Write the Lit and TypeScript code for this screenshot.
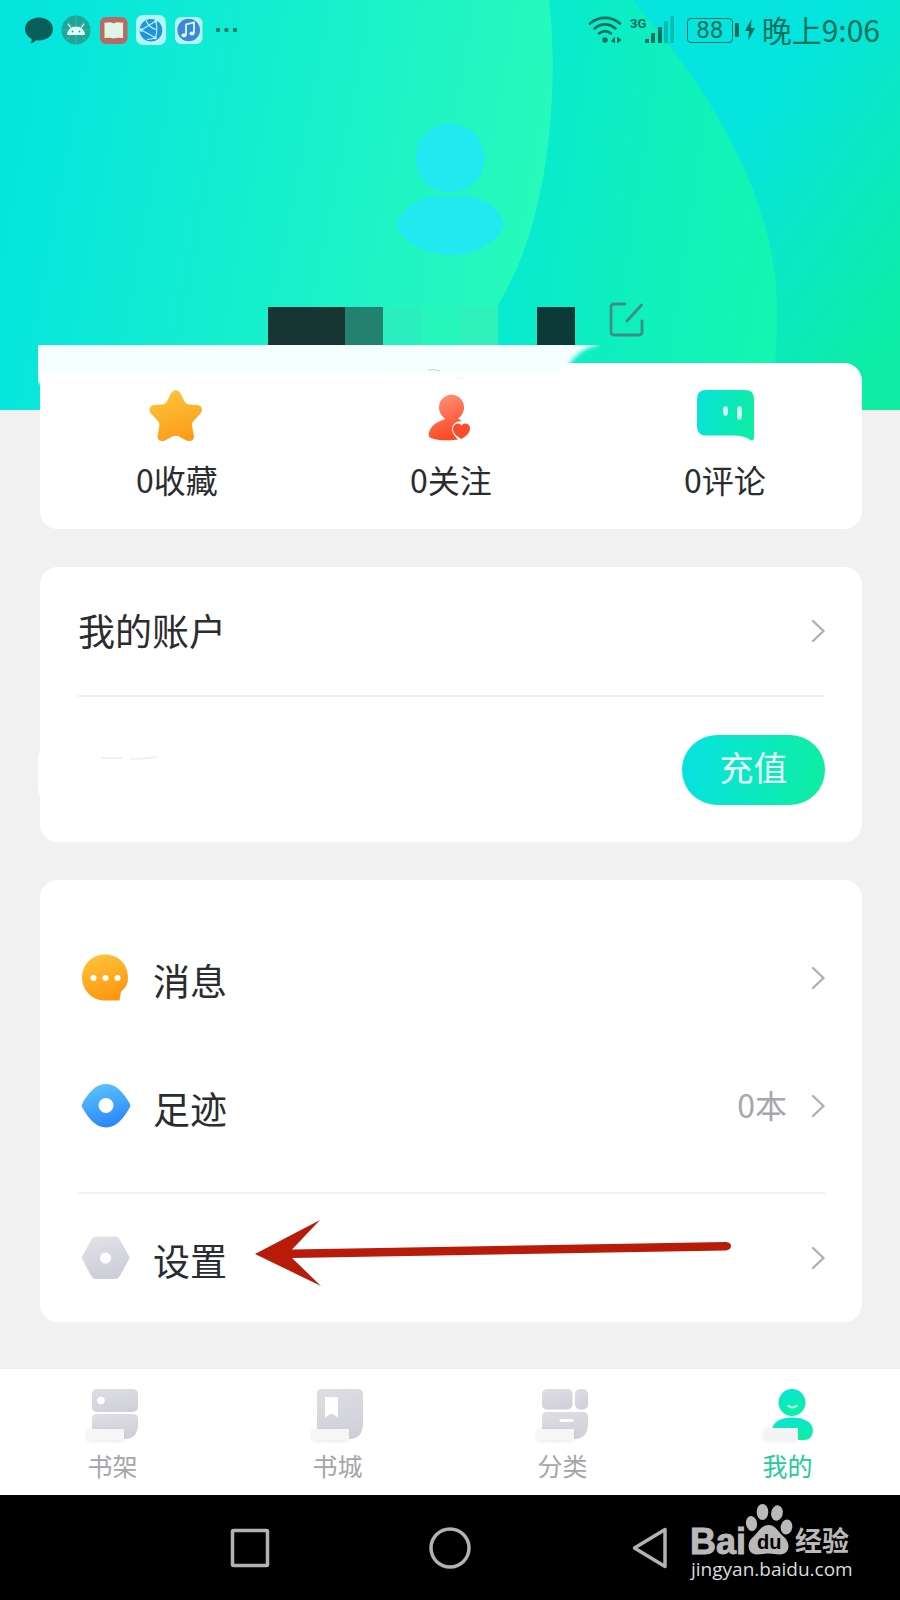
import { LitElement, html, css, svg } from "lit";
import { customElement, state } from "lit/decorators.js";

const chevron = html`<svg class="chevron" width="14" height="24" viewBox="0 0 14 24" aria-hidden="true">
  <path d="M2 2 L12.5 12 L2 22" fill="none" stroke="#afb0b4" stroke-width="2.400" stroke-linecap="round" stroke-linejoin="round" />
</svg>`;

@customElement("status-bar")
class StatusBar extends LitElement {
  static styles = css`
    :host {
      display: flex;
      justify-content: space-between;
      align-items: center;
      height: 60px;
      padding: 0 20px 0 24px;
      color: #04705f;
    }
    .group {
      display: flex;
      align-items: center;
    }
    svg {
      display: block;
    }
    .wifi {
      margin-right: 8px;
    }
    .battery {
      box-sizing: border-box;
      width: 46px;
      height: 25px;
      margin-left: 12px;
      border: 1px solid currentColor;
      border-radius: 4px;
      font: 24px/23px Roboto, sans-serif;
      text-align: center;
    }
    .nub {
      width: 4px;
      height: 14px;
      margin: 0 6px 0 2px;
      border-radius: 1px;
      background: currentColor;
    }
    .time {
      margin-left: 7px;
      padding-bottom: 2px;
      font: 30px/40px "Noto Sans CJK SC", sans-serif;
    }
  `;

  render() {
    return html`
      <div class="group">
        <svg width="216" height="32" viewBox="24 14 216 32" aria-hidden="true">
          <path d="M39 17.500c8 0 14 5 14 11.500s-6 11.500-14 11.500l-3-.2c-1.500 1.800-3.500 3-6 3.200 1.200-1.400 1.800-3 1.700-4.600C27.500 36.800 25 33.200 25 29c0-6.500 6-11.500 14-11.500z" fill="#065f58" />
          <circle cx="76" cy="30" r="14.500" fill="#1fa696" />
          <path d="M76 16v28M62 30h28M66 20l20 20M86 20L66 40" stroke="#4db9ac" stroke-width="0.800" />
          <path d="M67 35a9 8.500 0 0 1 18 0z" fill="#e2fff8" />
          <path d="M70.500 27.500l-2.300-3.300M81.500 27.500l2.300-3.300" stroke="#e2fff8" stroke-width="1.300" stroke-linecap="round" />
          <circle cx="72.500" cy="31.500" r="0.900" fill="#1fa696" /><circle cx="79.500" cy="31.500" r="0.900" fill="#1fa696" />
          <rect x="100" y="17" width="27.500" height="27" rx="6" fill="#b96a63" />
          <path d="M104.500 22.500l1.500 .3c3-.9 5.500-.6 7.800 .7 2.300-1.300 4.800-1.600 7.800-.7l1.500-.3V38h-1.500c-3-.3-5.500-.2-7.800 .6-2.300-.8-4.800-.9-7.800-.6h-1.500z" fill="#dff5e6" />
          <rect x="136" y="15" width="30" height="30" rx="7" fill="#b5f7f5" />
          <circle cx="151" cy="30.300" r="11.300" fill="#2491dc" />
          <path d="M141.300 30L155.800 21M141.300 30L155.300 37.800M155.800 21c1.500 6 1.500 11-.5 16.800M146 20.500c2 5 5 7.500 9.800 9M147 39.500c3 0 6-.5 8.300-1.700" fill="none" stroke="#b5f7f5" stroke-width="1.200" />
          <circle cx="141.300" cy="30" r="1.700" fill="#b5f7f5" /><circle cx="155.800" cy="21" r="1.500" fill="#b5f7f5" /><circle cx="155.300" cy="37.800" r="1.600" fill="#b5f7f5" />
          <rect x="175" y="17" width="27.500" height="27" rx="6" fill="#b5f5f3" />
          <circle cx="188.700" cy="30" r="11.300" fill="#3b87d8" />
          <path d="M186 35v-10.500l8-2v10.500" fill="none" stroke="#d8fbfb" stroke-width="1.800" />
          <ellipse cx="184" cy="35.300" rx="2.600" ry="2.100" fill="#d8fbfb" /><ellipse cx="192" cy="33.500" rx="2.600" ry="2.100" fill="#d8fbfb" />
          <circle cx="218" cy="30" r="2.200" fill="#087a66" /><circle cx="226.500" cy="30" r="2.200" fill="#087a66" /><circle cx="235" cy="30" r="2.200" fill="#087a66" />
        </svg>
      </div>
      <div class="group">
        <svg class="wifi" width="34" height="30" viewBox="588 15 34 30" fill="none" stroke="#04705f" aria-hidden="true">
          <path d="M590 23.500c9-7.500 21-7.500 30 0M594.500 28.500c6.500-5.500 14.500-5.500 21 0M599 33.500c3.700-3 8.300-3 12 0" stroke-width="2.600" stroke-linecap="round" />
          <circle cx="605" cy="40" r="2.700" fill="#04705f" stroke="none" />
          <path d="M615 36.500v7l-4-2.500zM617 36.500v7l4.500-3.500z" fill="#04705f" stroke="none" />
        </svg>
        <svg width="45" height="30" viewBox="630 15 45 30" aria-hidden="true">
          <text x="630" y="28" fill="#04705f" font-family="Roboto, sans-serif" font-size="13" font-weight="700">3G</text>
          <path d="M645 39h4v4h-4zM651 33h4v10h-4zM658 27h4v16h-4z" fill="#04705f" />
          <path d="M664 21h4v22h-4zM670.500 16h3.500v27h-3.500z" fill="#04705f" opacity="0.350" />
        </svg>
        <span class="battery">88</span>
        <span class="nub"></span>
        <svg width="10" height="24" viewBox="0 0 10 24" aria-hidden="true">
          <path d="M6.500 1L0 13h4L3 23l7-13H6z" fill="#04705f" />
        </svg>
        <span class="time">晚上9:06</span>
      </div>
    `;
  }
}

@customElement("profile-header")
class ProfileHeader extends LitElement {
  static styles = css`
    :host {
      display: block;
      position: relative;
      height: 410px;
      background: linear-gradient(125deg, #05e4de 70%, #0eeda3 96%);
    }
    .waves {
      position: absolute;
      inset: 0;
      width: 100%;
      height: 100%;
    }
    .content {
      position: relative;
      display: flex;
      flex-direction: column;
    }
    .avatar {
      align-self: center;
      margin-top: 63px;
    }
    .name-row {
      display: flex;
      justify-content: center;
      gap: 30px;
      height: 47px;
      margin-top: 41px;
      padding-left: 16px;
    }
    .mosaic {
      display: grid;
      grid-template-columns: repeat(8, 1fr);
      align-self: flex-end;
      width: 307px;
      height: 38px;
    }
    .dark {
      background: #173533;
    }
    .mid {
      background: #23826f;
    }
    .soft {
      background: #29eebe;
    }
    .light {
      background: #26f6bc;
    }
    .pale {
      background: #2ff0ba;
    }
    .deep {
      background: #0b3a38;
    }
    .edit {
      height: 43px;
      padding: 4px;
      border: 0;
      background: none;
      cursor: pointer;
    }
    svg {
      display: block;
    }
  `;

  render() {
    return html`
      <svg class="waves" viewBox="0 0 900 410" preserveAspectRatio="none" aria-hidden="true">
        <defs>
          <linearGradient id="far" gradientUnits="userSpaceOnUse" x1="470" y1="230" x2="790" y2="280">
            <stop offset="0" stop-color="#06e8d4" />
            <stop offset="0.550" stop-color="#0ff0bd" />
            <stop offset="1" stop-color="#12f7b0" />
          </linearGradient>
          <linearGradient id="near" gradientUnits="userSpaceOnUse" x1="30" y1="90" x2="550" y2="190">
            <stop offset="0" stop-color="#05e5de" />
            <stop offset="1" stop-color="#28fabb" />
          </linearGradient>
        </defs>
        <path d="M0 0H632C700 78 777 190 777 310C777 345 775 380 768 410H0z" fill="url(#far)" />
        <path d="M0 0H549C557 65 556 205 502 298C475 345 445 385 420 410H0z" fill="url(#near)" />
      </svg>
      <div class="content">
        <status-bar></status-bar>
        <svg class="avatar" width="108" height="134" viewBox="0 0 108 134" role="img" aria-label="头像">
          <circle cx="54" cy="35" r="34.500" fill="#22e8f0" />
          <path d="M1.500 99C8 86 22 74 38 73H72C88 74 102 86 107.500 99Q109 102 107.500 105C98 121 78 132 54.500 132S11 121 1.500 105Q0 102 1.500 99z" fill="#22e8f0" />
        </svg>
        <div class="name-row">
          <div class="mosaic" role="img" aria-label="昵称">
            <span class="dark"></span><span class="dark"></span><span class="mid"></span><span class="soft"></span>
            <span class="light"></span><span class="pale"></span><span></span><span class="deep"></span>
          </div>
          <button class="edit" type="button" aria-label="编辑">
            <svg width="35" height="35" viewBox="0 0 35 35" fill="none" stroke="#3d8f83" stroke-width="2.800" stroke-linecap="round">
              <path d="M16 2H5Q2 2 2 5V30Q2 33 5 33H30Q33 33 33 30V19" />
              <path d="M32.500 3L18 19" />
            </svg>
          </button>
        </div>
      </div>
    `;
  }
}

const statIcons = [
  svg`<defs><linearGradient id="g" x1="0.200" y1="0" x2="0.500" y2="1"><stop offset="0" stop-color="#fdc63c"/><stop offset="1" stop-color="#fc9d17"/></linearGradient></defs>
    <path d="M22.800 5.500Q27.700 -1.500 32.600 5.500L36 12.500Q37.500 16 41 16.500L49.500 17Q57 19.500 52 26L45 33.500Q43.800 35 44 37.500L46 48.500Q45.500 54.500 38.500 52.500L30.500 48.300Q27.700 47 24.900 48.300L17 52.500Q10 54.500 9.500 48.500L11.400 37.500Q11.600 35 10.400 33.500L3.400 26Q-1.500 19.500 6 17L14.400 16.500Q18 16 19.400 12.500Z" fill="url(#g)"/>`,
  svg`<defs><linearGradient id="g" x1="0" y1="0" x2="0.300" y2="1"><stop offset="0" stop-color="#fe9a80"/><stop offset="1" stop-color="#fc4a26"/></linearGradient></defs>
    <path d="M29 6.500a13 13 0 0 1 7 24L40 33C32 33 28 39 31 45Q33 49 36 51.500C27 53 14 52.500 8 49.500Q6 48 7 44.500C9 37.500 15 33.500 22.500 31.500Q22 31 23 30.500A13 13 0 0 1 29 6.500z" fill="url(#g)"/>
    <path d="M39.500 37.500C42 33.500 48.500 35.500 48 41C47.500 46 42.500 49 39.500 51C36 49 31 46 31 41C31 35.500 37.500 33.500 39.500 37.500z" fill="#fb4d2b"/>`,
  svg`<defs><linearGradient id="g" x1="0" y1="0.300" x2="1" y2="0.500"><stop offset="0" stop-color="#08e3d7"/><stop offset="1" stop-color="#0eeca6"/></linearGradient></defs>
    <path d="M10 2H49Q58 2 58 11V50Q57 54.500 53 51Q48 47.500 38 47.500H10Q1 47.500 1 38.500V11Q1 2 10 2z" fill="url(#g)"/>
    <path d="M29.500 20.500v5M43.500 20.500v9" stroke="#d9fff6" stroke-width="4.500" stroke-linecap="round"/>`,
];

const menuIcons = {
  message: svg`<defs><linearGradient id="g" x1="0.200" y1="0" x2="0.600" y2="1"><stop offset="0" stop-color="#fdc43a"/><stop offset="1" stop-color="#fd9610"/></linearGradient></defs>
    <path d="M24 1.500C37 1.500 47 11 47 24.500C47 31.500 44.500 35 40 38.500L38.500 47.500H24C11 47.500 1 37 1 24.500S11 1.500 24 1.500z" fill="url(#g)"/>
    <circle cx="12.500" cy="25" r="3" fill="#fff"/><circle cx="24.500" cy="25" r="3" fill="#fff"/><circle cx="36.500" cy="25" r="3" fill="#fff"/>`,
  history: svg`<defs><linearGradient id="g" x1="0.200" y1="0" x2="0.500" y2="1"><stop offset="0" stop-color="#5cc4fc"/><stop offset="1" stop-color="#2888fb"/></linearGradient></defs>
    <path d="M1.500 22C8 11 15 3 25 3S42 11 48.500 22Q50 24.500 48.500 27C42 38 35 46.500 25 46.500S8 38 1.500 27Q0 24.500 1.500 22z" fill="url(#g)"/>
    <circle cx="25" cy="24.500" r="7.500" fill="#fff"/>`,
  settings: svg`<defs><linearGradient id="g" x1="0" y1="0" x2="0.300" y2="1"><stop offset="0" stop-color="#e2e2e8"/><stop offset="1" stop-color="#ceced9"/></linearGradient></defs>
    <path d="M15 3.500H34Q37 3.500 38.500 6L48 23Q49 24.500 48 26.500L38.500 43.500Q37 46 34 46H15Q12 46 10.500 43.500L1.500 26.500Q0.500 24.500 1.500 23L10.500 6Q12 3.500 15 3.500z" fill="url(#g)"/>
    <circle cx="24.500" cy="25" r="5.500" fill="#fff"/>`,
};

@customElement("stat-item")
class StatItem extends LitElement {
  static properties = { index: { type: Number }, label: {} };
  declare index: number;
  declare label: string;
  static styles = css`
    :host {
      display: block;
    }
    .stat {
      display: flex;
      flex-direction: column;
      align-items: center;
      gap: 11px;
      color: #2b2c30;
      font-size: 32px;
      line-height: 48px;
      text-decoration: none;
    }
    svg {
      display: block;
    }
  `;
  render() {
    return html`<a class="stat" href="#stat">
      <svg width="58" height="56" viewBox="0 0 58 56" aria-hidden="true">${statIcons[this.index]}</svg>
      <span>${this.label}</span>
    </a>`;
  }
}

@customElement("menu-row")
class MenuRow extends LitElement {
  static properties = { icon: {}, label: {}, note: {} };
  declare icon: string;
  declare label: string;
  declare note: string;
  static styles = css`
    :host {
      display: block;
    }
    .row {
      display: flex;
      align-items: center;
      height: 128px;
      color: #2b2c30;
      font-size: 37px;
      line-height: 54px;
      text-decoration: none;
    }
    .icon {
      margin: 0 22px 0 3px;
    }
    .label {
      flex: 1;
      padding-bottom: 2px;
    }
    .icon + .label {
      padding: 4px 0 0;
    }
    .note {
      margin-right: 24px;
      padding-bottom: 4px;
      color: #a5a6ae;
      font-size: 32px;
    }
    svg {
      display: block;
    }
  `;
  render() {
    const glyph = menuIcons[this.icon as keyof typeof menuIcons];
    return html`<a class="row" href="#menu">
      ${glyph ? html`<svg class="icon" width="50" height="50" viewBox="0 0 50 50" aria-hidden="true">${glyph}</svg>` : null}
      <span class="label">${this.label}</span>
      ${this.note ? html`<span class="note">${this.note}</span>` : null}
      ${chevron}
    </a>`;
  }
}

const paper = svg`<path d="M7 41H39V49Q39 52 36 52H7Q1 52 1 46.500T7 41z" fill="#f6f6f8" filter="url(#s)"/>`;

const tabShapes = [
  svg`<rect x="7" y="1" width="46" height="23" rx="5" fill="url(#g)"/><circle cx="16" cy="12.500" r="3.800" fill="#fff"/>
    <path d="M12 26H48Q53 26 53 31V38Q52 51 39 51V41H7V31Q7 26 12 26z" fill="url(#g)"/>${paper}`,
  svg`<path d="M12 1H48Q53 1 53 6V37Q52 51 39 51V41H7V6Q7 1 12 1z" fill="url(#g)"/>
    <path d="M15 9H28V29.500L21.500 25.500L15 29.500z" fill="#fff"/>${paper}`,
  svg`<rect x="7" y="1" width="30.500" height="20.500" rx="5" fill="url(#g)"/><rect x="40" y="1" width="13" height="20.500" rx="5" fill="url(#g)"/>
    <path d="M12 24H48Q53 24 53 29V37Q52 51 39 51V41H7V29Q7 24 12 24z" fill="url(#g)"/>
    <path d="M26 32.500h11" stroke="#fff" stroke-width="3" stroke-linecap="round"/>${paper}`,
  svg`<circle cx="32" cy="14.500" r="13.500" fill="url(#g)"/><path d="M28 17.500q4.500 4 9 0" fill="none" stroke="#b9ffe9" stroke-width="1.800" stroke-linecap="round"/>
    <path d="M12 41C14 33 22 29.500 32 29.500C44 29.500 53 34 53 43Q52 52 44 52H38V41z" fill="url(#g)"/>
    <path d="M9 40H37.500V51.500H9Q3.500 51 3.500 46T9 40z" fill="#f2f4f5" filter="url(#s)"/>`,
];

@customElement("tab-item")
class TabItem extends LitElement {
  static properties = { index: { type: Number }, label: {}, active: { type: Boolean } };
  declare index: number;
  declare label: string;
  declare active: boolean;
  static styles = css`
    :host {
      display: block;
    }
    .tab {
      display: flex;
      flex-direction: column;
      align-items: center;
      gap: 3px;
      color: #a5a6aa;
      font-size: 25px;
      line-height: 36px;
      text-decoration: none;
    }
    .active {
      color: #25c99a;
    }
    svg {
      display: block;
    }
  `;
  render() {
    const [top, bottom] = this.active ? ["#07e5d5", "#10eda5"] : ["#dddde2", "#d0d0da"];
    return html`<a class=${this.active ? "tab active" : "tab"} href="#tab">
      <svg width="56" height="56" viewBox="0 0 56 56" aria-hidden="true">
        <defs>
          <linearGradient id="g" x1="0.200" y1="0" x2="0.500" y2="1">
            <stop offset="0" stop-color=${top} />
            <stop offset="1" stop-color=${bottom} />
          </linearGradient>
          <filter id="s" x="-20%" y="-50%" width="140%" height="220%">
            <feDropShadow dx="0" dy="1" stdDeviation="2" flood-color="#9a9aac" flood-opacity="0.250" />
          </filter>
        </defs>
        ${tabShapes[this.index]}
      </svg>
      <span>${this.label}</span>
    </a>`;
  }
}

@customElement("app-root")
class AppRoot extends LitElement {
  @state() private current = 3;

  static styles = css`
    :host {
      display: flex;
      flex-direction: column;
      min-height: 100vh;
      background: #f1f1f1;
      font-family: "Noto Sans CJK SC", sans-serif;
    }
    .cards {
      position: relative;
      flex: 1;
      display: flex;
      flex-direction: column;
      gap: 38px;
      margin-top: -47px;
      padding: 0 38px 47px 40px;
    }
    .card {
      position: relative;
      padding: 0 37px 0 38px;
      border-radius: 18px;
      background: #fff;
    }
    .stats {
      display: grid;
      grid-template-columns: repeat(3, 1fr);
      padding: 25px 0 26px;
    }
    .smear {
      position: absolute;
      top: -18px;
      left: -2px;
    }
    .stats stat-item {
      position: relative;
    }
    .line {
      height: 2px;
      margin: 0;
      border: 0;
      background: #f1f1f2;
    }
    .balance {
      display: flex;
      justify-content: flex-end;
      align-items: center;
      height: 145px;
    }
    .traces {
      position: absolute;
      left: -2px;
      bottom: 46px;
    }
    .recharge {
      width: 143px;
      height: 70px;
      padding: 0 0 6px;
      border: 0;
      border-radius: 35px;
      background: linear-gradient(95deg, #07e3dc 10%, #0eeda4 95%);
      color: #e8fffa;
      font: inherit;
      font-size: 34px;
      line-height: 50px;
      cursor: pointer;
    }
    .menu {
      padding-top: 34px;
    }
    .group {
      padding-bottom: 22px;
    }
    .settings {
      position: relative;
    }
    .arrow {
      position: absolute;
      top: 24px;
      left: 176px;
      pointer-events: none;
    }
    .tabs {
      display: grid;
      grid-template-columns: repeat(4, 1fr);
      padding: 19px 0 12px;
      background: #fff;
    }
    .system {
      position: relative;
      display: grid;
      grid-template-columns: 3fr 4fr 4fr 4fr 3fr;
      align-items: center;
      height: 105px;
      background: #000;
    }
    .key {
      justify-self: center;
      padding: 0;
      border: 0;
      background: none;
      cursor: pointer;
    }
    .first {
      grid-column: 2;
    }
    .key svg {
      display: block;
    }
    .brand {
      position: absolute;
      right: 46px;
      top: 6px;
    }
  `;

  render() {
    const tabs = ["书架", "书城", "分类", "我的"];
    return html`
      <profile-header></profile-header>
      <main class="cards">
        <section class="card stats">
          <svg class="smear" width="570" height="50" viewBox="0 0 570 50" aria-hidden="true">
            <defs>
              <filter id="soft"><feGaussianBlur stdDeviation="2" /></filter>
              <linearGradient id="fade" x1="0" y1="0" x2="0" y2="1">
                <stop offset="0.700" stop-color="#f5feff" />
                <stop offset="0.950" stop-color="#fff" />
              </linearGradient>
              <clipPath id="edge"><path d="M0 0H570V50H2L0 36z" /></clipPath>
            </defs>
            <g clip-path="url(#edge)">
              <path d="M-10 -10H560V0Q544 2 532 18L520 28L300 33L270 38H-10z" fill="url(#fade)" filter="url(#soft)" />
            </g>
            <path d="M390 25q8-1 12 1" fill="none" stroke="#c9d3d3" stroke-width="1" />
            <path d="M418 33h7" stroke="#eef0f0" stroke-width="1" />
          </svg>
          <stat-item .index=${0} label="0收藏"></stat-item>
          <stat-item .index=${1} label="0关注"></stat-item>
          <stat-item .index=${2} label="0评论"></stat-item>
        </section>

        <section class="card">
          <menu-row label="我的账户"></menu-row>
          <hr class="line" />
          <svg class="traces" width="130" height="46" viewBox="0 0 130 46" aria-hidden="true">
            <path d="M2 0Q0 4 0 12V36Q0 42 2 46z" fill="#fff" />
            <path d="M63 8h21M93 9q14 0 26-2" fill="none" stroke="#f1f1f1" stroke-width="2" />
          </svg>
          <div class="balance">
            <button class="recharge" type="button">充值</button>
          </div>
        </section>

        <section class="card menu">
          <div class="group">
            <menu-row icon="message" label="消息"></menu-row>
            <menu-row icon="history" label="足迹" note="0本"></menu-row>
          </div>
          <hr class="line" />
          <div class="settings">
            <menu-row icon="settings" label="设置"></menu-row>
            <svg class="arrow" width="480" height="70" viewBox="0 0 480 70" aria-hidden="true">
              <path d="M1 36L66 2L38 31.500L472 24Q477 24.500 477 28T472 32.500L38 40L67 68z" fill="#b81b0a" />
            </svg>
          </div>
        </section>
      </main>

      <nav class="tabs">
        ${tabs.map(
          (label, i) => html`<tab-item
            .index=${i}
            label=${label}
            ?active=${i === this.current}
            @click=${() => (this.current = i)}
          ></tab-item>`
        )}
      </nav>

      <footer class="system">
        <button class="key first" type="button" aria-label="最近任务">
          <svg width="40" height="40" viewBox="0 0 40 40" fill="none" stroke="#b2b2b2" stroke-width="3.500">
            <rect x="2.500" y="2.500" width="35" height="35" rx="1" />
          </svg>
        </button>
        <button class="key" type="button" aria-label="主页">
          <svg width="44" height="44" viewBox="0 0 44 44" fill="none" stroke="#b2b2b2" stroke-width="3.500">
            <circle cx="22" cy="22" r="19" />
          </svg>
        </button>
        <button class="key" type="button" aria-label="返回">
          <svg width="38" height="44" viewBox="0 0 38 44" fill="none" stroke="#b2b2b2" stroke-width="3.500" stroke-linejoin="round">
            <path d="M34 3.500V40.500L3.500 22z" />
          </svg>
        </button>
        <svg class="brand" width="166" height="88" viewBox="688 1501 166 88" fill="#b9b9b9">
          <text x="690" y="1554" font-family="Liberation Sans, sans-serif" font-weight="700" font-size="36" stroke="#b9b9b9" stroke-width="1">Bai</text>
          <ellipse cx="751.500" cy="1523.500" rx="5.500" ry="7.500" transform="rotate(-10 751.500 1523.500)" />
          <ellipse cx="762.500" cy="1512" rx="5.800" ry="8" />
          <ellipse cx="777" cy="1513" rx="5.800" ry="7.700" transform="rotate(12 777 1513)" />
          <ellipse cx="786.500" cy="1527" rx="5.800" ry="7.500" transform="rotate(8 786.500 1527)" />
          <path d="M768.500 1525C776 1525 778 1532 784 1537C791 1543 790 1554.500 780 1554.500C775 1554.500 773 1553.500 768.500 1553.500S762 1554.500 757 1554.500C748 1554.500 746 1544 752 1538C759 1532 761 1525 768.500 1525z" />
          <text x="757" y="1549" fill="#000" font-family="Liberation Sans, sans-serif" font-weight="700" font-size="20">du</text>
          <text x="795" y="1551" font-family="Noto Sans CJK SC, sans-serif" font-weight="700" font-size="27">经验</text>
          <text x="691" y="1576" fill="#dcdcdc" font-family="Open Sans, sans-serif" font-size="19">jingyan.baidu.com</text>
        </svg>
      </footer>
    `;
  }
}
